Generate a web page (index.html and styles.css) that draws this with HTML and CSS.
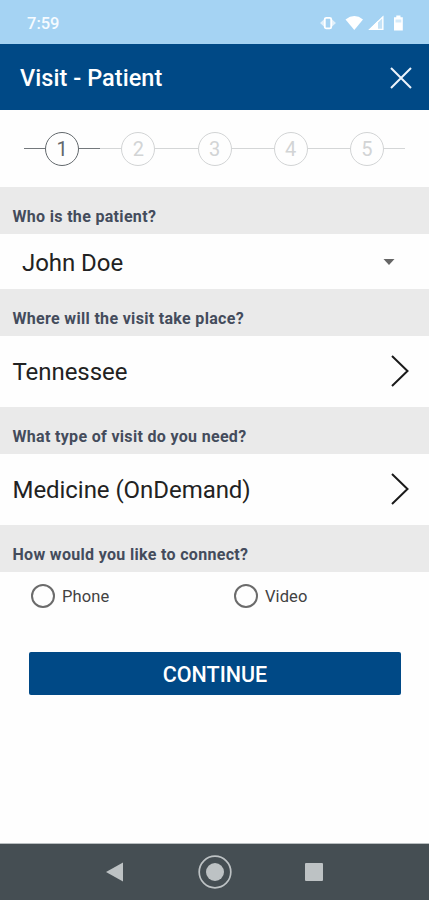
FILE: index.html
```html
<!DOCTYPE html>
<html lang="en">
<head>
<meta charset="utf-8">
<title>Visit - Patient</title>
<link rel="stylesheet" href="styles.css">
</head>
<body>
<div class="screen">
  <div class="status-bar">
    <span class="clock">7:59</span>
    <svg class="status-icons" width="86" height="18" viewBox="0 0 86 18">
      <path class="side" d="M5 4.500 0 9l5 4.500zM11 4.500 16 9l-5 4.500z"/>
      <rect class="ring" x="4.800" y="3.800" width="6.400" height="10.600" rx="1.500"/>
      <path d="M25.500 5.500Q34.500 -1.300 43 5.500L34.300 16z"/>
      <path class="dim" d="M48.500 16 63.500 1.500V16z"/>
      <path d="M48.500 16 58 6.800V16z"/>
      <path class="outline" d="M62.800 3V15.300H50z"/>
      <path d="M74 3.300h2.300V1.500h4.200v1.800h2.300V16.500H74z"/>
      <path class="level" d="M75.500 5.500h5.800v3h-5.800z"/>
    </svg>
  </div>
  <header class="title-bar">
    <h1>Visit - Patient</h1>
    <svg class="close" width="22" height="22" viewBox="0 0 22 22"><path d="M1 1 21 21M21 1 1 21"/></svg>
  </header>
  <ol class="steps">
    <li class="step active"><span>1</span></li>
    <li class="step"><span>2</span></li>
    <li class="step"><span>3</span></li>
    <li class="step"><span>4</span></li>
    <li class="step"><span>5</span></li>
  </ol>
  <h2 class="question">Who is the patient?</h2>
  <div class="row select">
    <span class="value">John Doe</span>
    <svg width="12" height="6" viewBox="0 0 12 6"><path d="M.5 0h11L6 6z"/></svg>
  </div>
  <h2 class="question">Where will the visit take place?</h2>
  <div class="row">
    <span class="value">Tennessee</span>
    <svg class="chevron" width="18" height="32" viewBox="0 0 18 32"><path d="M1 1 16.500 16 1 31"/></svg>
  </div>
  <h2 class="question">What type of visit do you need?</h2>
  <div class="row">
    <span class="value">Medicine (OnDemand)</span>
    <svg class="chevron" width="18" height="32" viewBox="0 0 18 32"><path d="M1 1 16.500 16 1 31"/></svg>
  </div>
  <h2 class="question">How would you like to connect?</h2>
  <div class="options">
    <label class="option"><span class="radio"></span><span>Phone</span></label>
    <label class="option"><span class="radio"></span><span>Video</span></label>
  </div>
  <button class="continue">CONTINUE</button>
  <nav class="nav-bar">
    <svg width="20" height="20" viewBox="0 0 20 20"><path d="M1 10 18 .5v19z"/></svg>
    <svg width="36" height="36" viewBox="0 0 36 36"><circle class="home" cx="18" cy="18" r="15.800"/><circle cx="18" cy="18" r="9"/></svg>
    <svg width="20" height="20" viewBox="0 0 20 20"><rect x="1" y="1" width="18" height="18" rx="1"/></svg>
  </nav>
</div>
</body>
</html>
```

FILE: styles.css
```css
* { box-sizing: border-box; }
body { margin: 0; font-family: Roboto, sans-serif; background: #fefefe; }
.screen { width: 429px; height: 900px; display: flex; flex-direction: column; overflow: hidden; }
.screen > * { flex-shrink: 0; }
h1, h2 { margin: 0; }
svg { display: block; flex: none; }

.status-bar { height: 44px; padding: 2px 23px 0 27px; display: flex; align-items: center; justify-content: space-between; background: #a5d3f3; color: #f6fbff; }
.clock { font-size: 16.500px; font-weight: 500; }
.status-icons { fill: #fff; }
.status-icons .side { opacity: .65; }
.status-icons .ring { fill: #a5d3f3; stroke: #fff; stroke-width: 1.800; }
.status-icons .dim { opacity: .35; }
.status-icons .outline { fill: none; stroke: #fff; stroke-width: 1.300; }
.status-icons .level { fill: #d5ebfa; }

.title-bar { height: 66px; padding: 2px 17px 0 20px; display: flex; align-items: center; justify-content: space-between; background: #004986; color: #fff; }
.title-bar h1 { font-size: 23.500px; font-weight: 500; line-height: 30px; letter-spacing: .05px; }
.close { fill: none; stroke: #edf4fc; stroke-width: 2; }

.steps { list-style: none; margin: 0; padding: 0 24px; height: 77px; display: flex; align-items: center; }
.step { flex: 1; display: flex; align-items: center; color: #d2d4d5; font-size: 20px; }
.step::before, .step::after { content: ""; flex: 1; height: 1.500px; background: #d4d6d7; }
.step span { width: 34px; height: 34px; border: 1.500px solid currentColor; border-radius: 50%; text-align: center; line-height: 33px; }
.step.active { color: #62686c; }
.step.active::before, .step.active::after { background: #73787c; }

.question { height: 47px; padding: 20px 12.500px 0; background: #eaeaea; color: #444c5c; font-size: 16px; font-weight: 700; line-height: 20px; letter-spacing: .32px; white-space: nowrap; }
.row { height: 71px; padding: 0 20px 0 12.500px; display: flex; align-items: center; justify-content: space-between; background: #fefefe; color: #222; }
.row.select { height: 55px; padding: 0 34px 0 22px; }
.select svg { fill: #666; }
.value { font-size: 24px; line-height: 32px; white-space: nowrap; letter-spacing: -.05px; }
.select .value { padding-top: 2px; }
.chevron { fill: none; stroke: #1a1a1a; stroke-width: 2; }
.row:not(.select) .chevron { margin-top: -1px; }

.options { height: 80px; padding: 12px 31px 0; display: flex; align-items: flex-start; }
.option { flex: none; width: 203px; height: 24px; display: flex; align-items: center; gap: 7px; color: #424242; font-size: 16.500px; letter-spacing: .1px; }
.option span:last-child { padding-top: 1px; }
.radio { width: 24px; height: 24px; border: 2px solid #6b6b6b; border-radius: 50%; }

.continue { width: 372px; height: 43px; margin: 0 0 0 29px; padding: 2px 0 0; border: 0; border-radius: 2px; background: #004986; color: #fff; font: 500 21.500px/41px Roboto, sans-serif; }

.nav-bar { margin-top: auto; height: 57px; padding: 0 105px; border-top: 1px solid #b9bec0; display: flex; align-items: center; justify-content: space-between; background: #454e53; fill: #bdc2c4; }
.home { fill: none; stroke: #bdc2c4; stroke-width: 1.700; }
```
